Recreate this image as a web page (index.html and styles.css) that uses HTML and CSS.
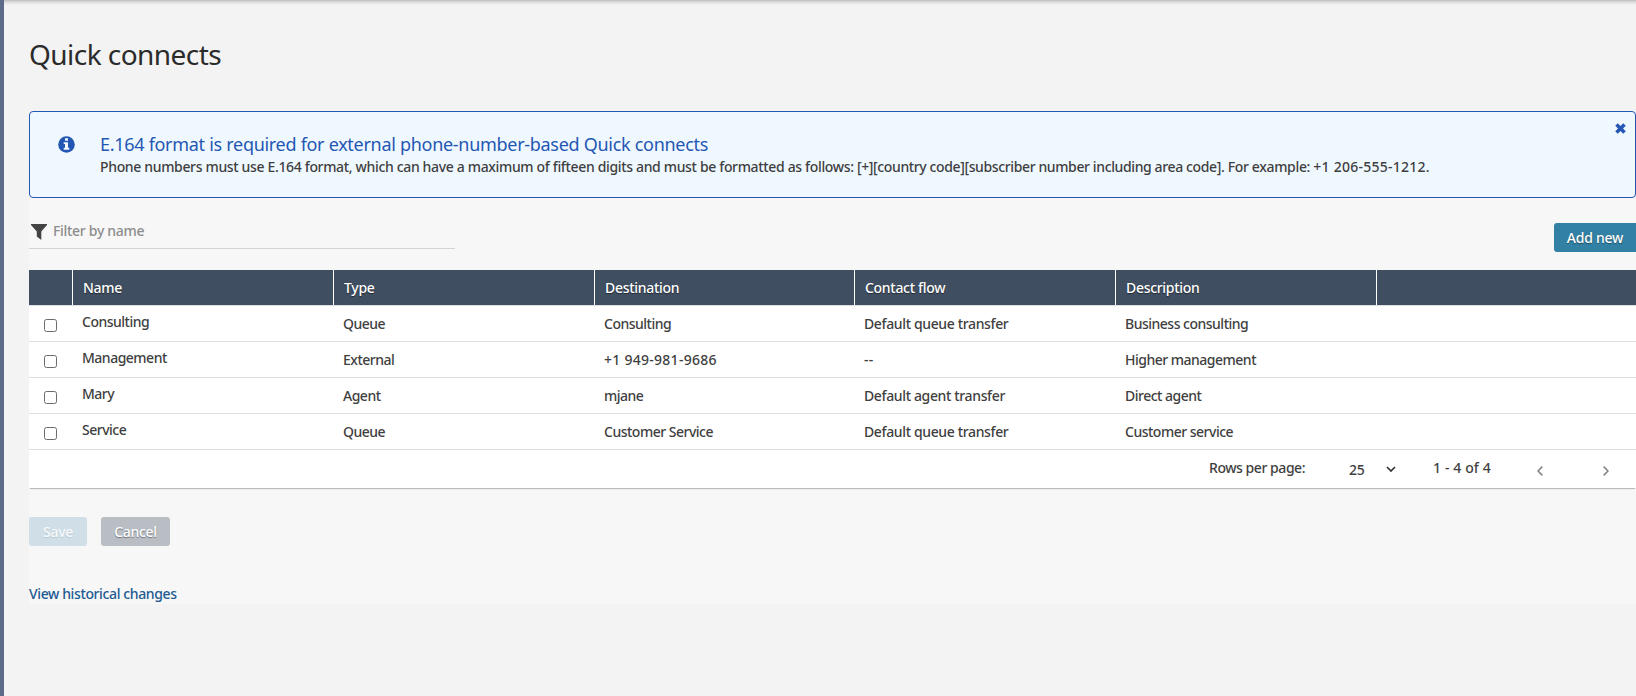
FILE: index.html
```html
<!DOCTYPE html>
<html lang="en">
<head>
<meta charset="utf-8">
<title>Quick connects</title>
<link rel="stylesheet" href="styles.css">
</head>
<body>
<main class="page">
  <h1 class="title">Quick connects</h1>
  <div class="panel">
    <section class="notice">
      <svg class="notice-icon" viewBox="0 0 17 17"><circle cx="8.5" cy="8.5" r="8.3" fill="#2457b3"/><path d="M7 2.3h3v2.4H7zM5.7 6.2H10v5.6h1.3v1.9H5.7v-1.9H7V8.1H5.7z" fill="#f0f8ff"/></svg>
      <div class="notice-body">
        <h2 class="notice-title">E.164 format is required for external phone-number-based Quick connects</h2>
        <p class="notice-text">Phone numbers must use E.164 format, which can have a maximum of fifteen digits and must be formatted as follows: <span class="syntax">[+][country code][subscriber number including area code]</span>. For example: <span class="example">+1 206-555-1212.</span></p>
      </div>
      <svg class="notice-close" viewBox="0 0 11 11"><path d="M1.500 1.500l8 8M9.500 1.500l-8 8" stroke="#2457b3" stroke-width="3.600"/></svg>
    </section>
    <div class="toolbar">
      <label class="filter">
        <svg class="filter-icon" viewBox="0 0 16 16"><path d="M0 0h16v1L10.3 7.6V16L5.8 12.6V7.6L0 1z" fill="#444"/></svg>
        <span class="filter-text">Filter by name</span>
      </label>
      <button class="btn btn-add">Add new</button>
    </div>
    <div class="table">
      <div class="row head"><div></div><div>Name</div><div>Type</div><div>Destination</div><div>Contact flow</div><div>Description</div><div></div></div>
      <div class="row"><div><input type="checkbox" class="check"></div><div class="name">Consulting</div><div>Queue</div><div>Consulting</div><div class="flow">Default queue transfer</div><div>Business consulting</div><div></div></div>
      <div class="row"><div><input type="checkbox" class="check"></div><div class="name">Management</div><div>External</div><div class="phone">+1 949-981-9686</div><div class="phone">--</div><div>Higher management</div><div></div></div>
      <div class="row"><div><input type="checkbox" class="check"></div><div class="name">Mary</div><div>Agent</div><div>mjane</div><div class="flow">Default agent transfer</div><div>Direct agent</div><div></div></div>
      <div class="row"><div><input type="checkbox" class="check"></div><div class="name">Service</div><div>Queue</div><div>Customer Service</div><div class="flow">Default queue transfer</div><div>Customer service</div><div></div></div>
      <div class="pager">
        <span class="pager-label">Rows per page:</span>
        <span class="pager-size">25</span>
        <svg class="pager-caret" viewBox="0 0 10 6"><path d="M1 1l4 4 4-4" fill="none" stroke="#333" stroke-width="1.7"/></svg>
        <span class="pager-range">1 - 4 of 4</span>
        <svg class="pager-prev" viewBox="0 0 6 10"><path d="M5.3.6L1 5l4.300 4.400" fill="none" stroke="#858585" stroke-width="1.600"/></svg>
        <svg class="pager-next" viewBox="0 0 6 10"><path d="M.7.6L5 5 .7 9.400" fill="none" stroke="#858585" stroke-width="1.600"/></svg>
      </div>
    </div>
    <div class="actions">
      <button class="btn btn-save">Save</button>
      <button class="btn btn-cancel">Cancel</button>
    </div>
    <a class="history">View historical changes</a>
  </div>
</main>
</body>
</html>
```
FILE: styles.css
```css
* { box-sizing: border-box; }
body {
  margin: 0;
  height: 696px;
  overflow: hidden;
  background: #f3f3f3;
  color: #3f3f3f;
  font: 500 14px/20px "Noto Sans", sans-serif;
  letter-spacing: -0.3px;
}
.page {
  height: 696px;
  padding: 35px 0 0 25px;
  border-left: 4px solid #5d6b89;
  background: linear-gradient(#bdbdbd, #dcdcdc 2px, #f3f3f3 5px);
}
.title {
  margin: 0;
  height: 76px;
  font-size: 28px;
  font-weight: 400;
  line-height: 38px;
  letter-spacing: -0.55px;
  color: #2b2b2b;
}
.panel { height: 493px; background: #f7f7f7; }
.notice {
  display: flex;
  align-items: flex-start;
  height: 87px;
  padding-left: 27.5px;
  border: 1px solid #2457b3;
  border-radius: 4px;
  background: #f0f8ff;
}
.notice-icon { flex: none; width: 17px; height: 17px; margin-top: 24px; }
.notice-body { flex: 1; margin: 20px 0 0 25.500px; white-space: nowrap; }
.notice-title {
  margin: 0;
  font-size: 18px;
  font-weight: 400;
  line-height: 25px;
  letter-spacing: -0.295px;
  color: #2457b3;
}
.notice-text { margin: 0; line-height: 20px; letter-spacing: -0.34px; }
.syntax { letter-spacing: -0.38px; }
.example { letter-spacing: 0.25px; }
.notice-close { flex: none; width: 11px; height: 11px; margin: 11px 9px 0 0; }
.toolbar { display: flex; justify-content: space-between; height: 72px; }
.filter {
  display: flex;
  align-items: flex-start;
  gap: 6px;
  width: 426px;
  height: 51px;
  padding: 23px 0 0 2px;
  border-bottom: 1px solid #d3d3d3;
}
.filter-icon { width: 16px; height: 16px; margin-top: 3px; }
.filter-text { color: #8d8d8d; }
.btn {
  height: 29px;
  padding: 0;
  border: 0;
  border-radius: 3px;
  color: #fff;
  font: inherit;
  letter-spacing: inherit;
  text-shadow: 0 1px 1px rgba(0, 0, 0, .4);
}
.btn-add { width: 82px; margin-top: 25px; border-radius: 3px 0 0 3px; background: #3281a4; letter-spacing: -0.25px; }
.table { background: #fff; box-shadow: 0 2px 1px -1px rgba(0, 0, 0, .24); }
.row {
  display: grid;
  grid-template-columns: 43px 261px 261px 260px 261px 261px 1fr;
  height: 36px;
  border-bottom: 1px solid #dedfe0;
  letter-spacing: -0.5px;
}
.row > div { padding: 8px 0 0 10px; }
.row > .name { padding-top: 6px; }
.row > .phone { letter-spacing: 0.27px; }
.row > .flow { letter-spacing: -0.36px; }
.row > div:first-child { padding: 13px 0 0 15px; }
.head { color: #fff; letter-spacing: -0.3px; text-shadow: 0 1px 1px rgba(0, 0, 0, .5); }
.row.head > div { height: 35px; padding: 8px 0 0 10px; background: #404e61; border-left: 1px solid #fff; }
.row.head > div:first-child { border-left: 0; }
.check {
  appearance: none;
  display: block;
  width: 13px;
  height: 13px;
  margin: 0;
  border: 1px solid #6b6b6b;
  border-radius: 2.5px;
  background: #fff;
}
.pager { display: flex; align-items: flex-start; height: 38px; padding: 8px 0 0 1180px; }
.pager-label { width: 140px; letter-spacing: -0.45px; }
.pager-size { width: 37px; margin-top: 2px; }
.pager-caret { width: 10px; height: 6px; margin-top: 8px; }
.pager-range { width: 103px; padding-left: 37px; letter-spacing: 0.12px; white-space: nowrap; }
.pager-prev, .pager-next { width: 6px; height: 10px; margin-top: 8px; }
.pager-prev { margin-left: 38px; }
.pager-next { margin-left: 60px; }
.actions { display: flex; gap: 14px; margin-top: 29px; }
.btn-save { width: 58px; background: #cfdee7; color: #f7fafb; text-shadow: 0 1px 1px rgba(0, 0, 0, .1); }
.btn-cancel { width: 69px; background: #b9bec5; }
.history { display: block; margin-top: 38px; color: #225a92; letter-spacing: -0.38px; }
```
